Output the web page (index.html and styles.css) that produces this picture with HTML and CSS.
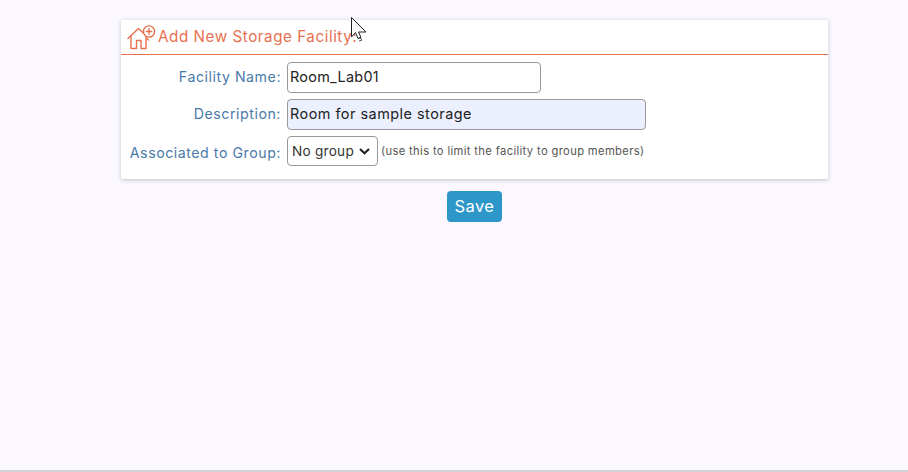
FILE: index.html
```html
<!DOCTYPE html>
<html lang="en">
<head>
<meta charset="utf-8">
<title>Add New Storage Facility</title>
<link rel="stylesheet" href="styles.css">
</head>
<body>
<main class="page">
  <form class="form-wrap">
    <section class="card">
      <h2 class="card-title">
        <svg class="house-icon" width="29" height="26" viewBox="0 0 29 26" fill="none" stroke="#e8704f" stroke-width="1.4" stroke-linejoin="round" stroke-linecap="round">
          <path d="M1 14.5 L11.5 4.5 L16 8.8"/>
          <path d="M4 12 V24.5 H9.5 V16.5 H14 V24.5 H19 V14"/>
          <path d="M19 14 L21.5 16"/>
          <circle cx="22" cy="7.5" r="5.6"/>
          <path d="M22 4.8 V10.2 M19.3 7.5 H24.7"/>
        </svg>
        <span>Add New Storage Facility:</span>
      </h2>
      <div class="fields">
        <label class="field-label" for="name">Facility Name:</label>
        <div class="field-control"><input class="text-input name-input" id="name" type="text" value="Room_Lab01"></div>
        <label class="field-label" for="desc">Description:</label>
        <div class="field-control"><input class="text-input desc-input" id="desc" type="text" value="Room for sample storage"></div>
        <label class="field-label group-label" for="group">Associated to Group:</label>
        <div class="field-control">
          <div class="select-box" id="group">
            <span>No group</span>
            <svg class="chevron" width="11" height="7" viewBox="0 0 11 7" fill="none" stroke="#222" stroke-width="2.2"><path d="M1 1 L5.5 5.2 L10 1"/></svg>
          </div>
          <span class="hint">(use this to limit the facility to group members)</span>
        </div>
      </div>
    </section>
    <div class="actions"><button class="save-btn" type="button">Save</button></div>
  </form>
</main>
<svg class="cursor" width="18" height="25" viewBox="0 0 18 25" fill="#fff" stroke="#222" stroke-width="1"><path d="M0.5 0.5 V20 L4.5 15.5 L7 21.5 L10 20.5 L7.5 15 H15 Z"/><path d="M8 20 L11 23 L8 24" fill="none" stroke-width="0.8"/></svg>
</body>
</html>
```

FILE: styles.css
```css
* { box-sizing: border-box; }
html, body { height: 100%; }
body {
  margin: 0;
  background: #fbf9ff;
  font-family: Inter, "Open Sans", sans-serif;
  overflow: hidden;
}
.page {
  height: 472px;
  padding: 20px 0 0 121px;
  border-bottom: 2px solid #d2d2d6;
}
.form-wrap { width: 707px; }
.card {
  background: #fff;
  height: 159px;
  border-radius: 2px;
  box-shadow: 0 1px 4px rgba(60, 60, 80, 0.3);
}
.card-title {
  display: flex;
  align-items: center;
  gap: 2px;
  height: 35px;
  margin: 0;
  padding: 0 0 2px 6px;
  border-bottom: 1px solid #e2704a;
  color: #e8704f;
  font-size: 15.2px;
  font-weight: 400;
  letter-spacing: 0.55px;
}
.house-icon { flex: none; margin-top: 1px; }
.fields {
  display: grid;
  grid-template-columns: 160px 1fr;
  column-gap: 6px;
  row-gap: 6px;
  padding-top: 7px;
}
.field-label {
  display: flex;
  align-items: center;
  justify-content: flex-end;
  padding-bottom: 3px;
  color: #4a7aab;
  font-size: 14.2px;
  letter-spacing: 0.53px;
}
.group-label { padding: 3px 0 0; }
.field-control { display: flex; align-items: center; height: 31px; }
.field-control:last-child { height: 30px; }
.text-input {
  height: 31px;
  padding: 0 2px 3px;
  border: 1px solid #999;
  border-radius: 4px;
  background: #fff;
  color: #222;
  font: 14.4px Inter, "Open Sans", sans-serif;
  letter-spacing: 0.5px;
}
.name-input { width: 254px; letter-spacing: 0.3px; }
.desc-input { width: 359px; background: #ebeffe; }
.select-box {
  display: flex;
  align-items: center;
  justify-content: space-between;
  width: 91px;
  height: 30px;
  padding: 0 7px 0 4px;
  border: 1px solid #999;
  border-radius: 4px;
  background: #fff;
  color: #333;
  font-size: 13.6px;
  letter-spacing: 0.25px;
}
.hint {
  margin: 0 0 0 3px;
  color: #555;
  font-size: 11.2px;
  letter-spacing: 0.36px;
}
.actions { display: flex; justify-content: center; padding-top: 12px; }
.save-btn {
  width: 55px;
  height: 31px;
  padding: 0 0 1px;
  border: 0;
  border-radius: 4px;
  background: #2d97c9;
  color: #fff;
  font: 400 16.5px Inter, "Open Sans", sans-serif;
  letter-spacing: 0.4px;
}
.cursor { position: absolute; left: 351px; top: 17px; }
```
